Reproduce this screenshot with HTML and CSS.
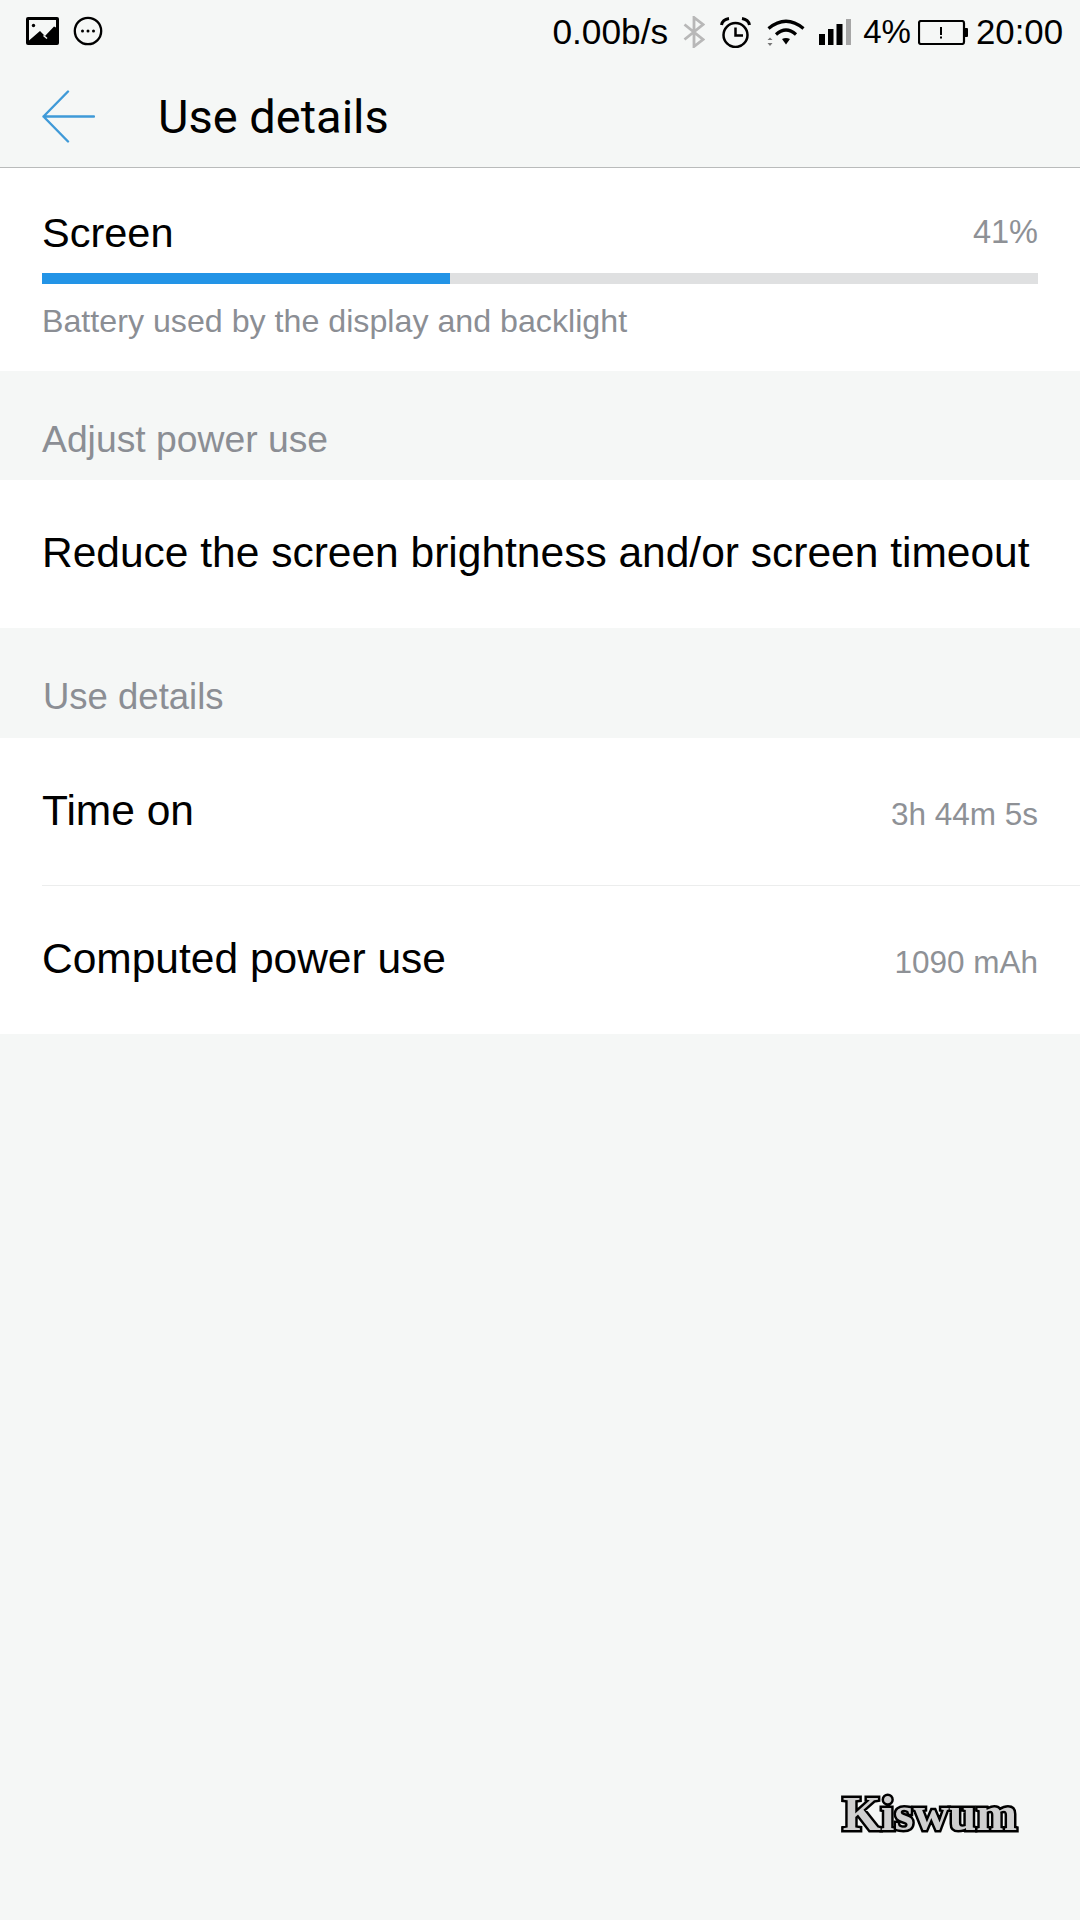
FILE: index.html
```html
<!DOCTYPE html>
<html lang="en">
<head>
<meta charset="utf-8">
<title>Use details</title>
<link rel="stylesheet" href="styles.css">
</head>
<body>
<div class="page">
  <div class="status">
    <div class="status-left">
      <svg class="ic-pic" viewBox="0 0 33 28"><rect x="0" y="0" width="33" height="28" rx="2" fill="#000"/><rect x="3" y="3" width="27" height="22" fill="#f5f7f6"/><circle cx="7.500" cy="8.500" r="1.700" fill="#000"/><path d="M3 25V23.500L14 14L19 19L28 9.500L30 10.500V25Z" fill="#000"/><path d="M17.500 18.500L21 21.500" stroke="#f5f7f6" stroke-width="1.500"/></svg>
      <svg class="ic-more" viewBox="0 0 30 30"><circle cx="15" cy="15" r="13.200" fill="none" stroke="#000" stroke-width="2.300"/><circle cx="9.500" cy="15" r="1.500"/><circle cx="15" cy="15" r="1.500"/><circle cx="20.500" cy="15" r="1.500"/></svg>
    </div>
    <div class="status-right">
      <span class="st-text st-speed">0.00b/s</span>
      <svg class="ic-bt" viewBox="0 0 22 32"><path d="M1.500 8.500L20 23.500L11 30.500V1.500L20 8.500L1.500 23.500" fill="none" stroke="#b8b8b8" stroke-width="2.800"/></svg>
      <svg class="ic-alarm" viewBox="0 0 31 31"><circle cx="15.500" cy="18" r="12" fill="none" stroke="#000" stroke-width="2.500"/><path d="M15.500 10.500V18.500H23" fill="none" stroke="#000" stroke-width="2.500"/><path d="M1.500 8Q2.500 2.500 9 1.500M29.500 8Q28.500 2.500 22 1.500" fill="none" stroke="#000" stroke-width="3"/></svg>
      <svg class="ic-wifi" viewBox="0 0 38 28"><path d="M1.500 10.500Q19 -4 36.500 10.500" fill="none" stroke="#000" stroke-width="3.200"/><path d="M9 16.500Q19 7.500 29 16.500" fill="none" stroke="#000" stroke-width="3.200"/><path d="M15 21Q19 19 23 21L19 26.500Z" fill="#000"/><path d="M0.500 22L3 19.500L5.500 22Z M0.500 25H5.500L3 28Z" fill="#777"/></svg>
      <svg class="ic-signal" viewBox="0 0 32 26"><rect x="0" y="15" width="6" height="11"/><rect x="9" y="10" width="5.500" height="16"/><rect x="17.500" y="5" width="6" height="21"/><rect x="27" y="0" width="5" height="26" fill="#a6a6a6"/></svg>
      <span class="st-text st-pct">4%</span>
      <svg class="ic-batt" viewBox="0 0 50 25"><rect x="1" y="1" width="45" height="23" rx="2" fill="none" stroke="#000" stroke-width="2.200"/><rect x="46" y="8" width="4" height="9" rx="1" fill="#000"/><rect x="22" y="7" width="2" height="8" fill="#000"/><rect x="22" y="16.500" width="2" height="2" fill="#000"/></svg>
      <span class="st-text st-time">20:00</span>
    </div>
  </div>

  <header class="appbar">
    <svg class="ic-back" viewBox="0 0 53 53"><path d="M26 1.500L1.500 26.500L26 51.500M1.500 26.500H52" fill="none" stroke="#3f9ad8" stroke-width="2.400" stroke-linecap="round" stroke-linejoin="round"/></svg>
    <h1 class="title">Use details</h1>
  </header>

  <section class="card usage">
    <div class="usage-head">
      <span class="row-label label-screen">Screen</span>
      <span class="row-value value-pct">41%</span>
    </div>
    <div class="bar"><div class="bar-fill"></div></div>
    <p class="usage-note">Battery used by the display and backlight</p>
  </section>

  <h2 class="section section-first">Adjust power use</h2>
  <section class="card">
    <div class="row"><span class="row-label label-long">Reduce the screen brightness and/or screen timeout</span></div>
  </section>

  <h2 class="section section-alt">Use details</h2>
  <section class="card">
    <div class="row row-divided"><span class="row-label">Time on</span><span class="row-value">3h 44m 5s</span></div>
    <div class="row"><span class="row-label">Computed power use</span><span class="row-value">1090 mAh</span></div>
  </section>

  <div class="spacer"><span class="watermark">Kiswum</span></div>
</div>
</body>
</html>
```

FILE: styles.css
```css
* { box-sizing: border-box; }
html, body { margin: 0; padding: 0; }
body { width: 1080px; height: 1920px; overflow: hidden; background: #f5f7f6; font-family: "Liberation Sans", Arial, sans-serif; color: #000; }
.page { display: flex; flex-direction: column; height: 1920px; }

.status { height: 64px; padding: 0 17px 0 26px; display: flex; justify-content: space-between; align-items: center; flex: none; }
.status-left, .status-right { display: flex; align-items: center; }
.status-left { gap: 14px; padding-bottom: 2px; }
.ic-pic { width: 33px; height: 28px; }
.ic-more { width: 30px; height: 30px; }
.st-text { font-size: 34.800px; line-height: 40px; white-space: nowrap; }
.st-speed { font-size: 35.300px; }
.ic-bt { width: 22px; height: 32px; margin-left: 15px; }
.ic-alarm { width: 31px; height: 31px; margin-left: 15px; }
.ic-wifi { width: 38px; height: 28px; margin-left: 16px; }
.ic-signal { width: 32px; height: 26px; margin-left: 14px; }
.st-pct { margin-left: 12px; font-size: 33px; }
.ic-batt { width: 50px; height: 25px; margin-left: 7px; }
.st-time { margin-left: 8px; }

.appbar { height: 104px; flex: none; display: flex; align-items: center; padding: 0 0 0 42px; border-bottom: 1px solid #b9bbbb; }
.ic-back { width: 53px; height: 53px; flex: none; margin-top: 1px; }
.title { margin: 3px 0 0 63px; font: 400 47px/56px Roboto, sans-serif; }

.card { background: #fff; flex: none; }
.usage { height: 203px; padding: 0 42px; }
.usage-head { height: 105px; display: flex; justify-content: space-between; align-items: center; padding-top: 24px; }
.row-label { font-size: 42.500px; line-height: 48px; white-space: nowrap; }
.label-screen { font-size: 41.500px; }
.row-value { font-size: 31.500px; line-height: 36px; color: #8e9196; position: relative; top: 3px; }
.value-pct { font-size: 32.500px; top: -1px; }
.bar { height: 11px; background: #dfe0e1; }
.bar-fill { width: 41%; height: 100%; background: #2394e6; }
.usage-note { margin: 19px 0 0; font-size: 32.200px; line-height: 36px; color: #8b8e94; }

.section { margin: 0; flex: none; font-weight: 400; font-size: 36.500px; line-height: 40px; color: #8b8e94; }
.section-first { height: 109px; padding: 48px 0 0 42px; font-size: 37.300px; }
.section-alt { height: 110px; padding: 49px 0 0 43px; }

.row { height: 148px; margin-left: 42px; padding: 0 42px 2px 0; display: flex; justify-content: space-between; align-items: center; }
.row-divided { border-bottom: 1px solid #eceded; }

.spacer { flex: 1; display: flex; justify-content: flex-end; align-items: flex-start; padding: 755px 63px 0 0; }
.watermark { font: 700 49px/50px "Liberation Serif", serif; color: #cfcfcf; -webkit-text-stroke: 5px #000; paint-order: stroke fill; }
```
